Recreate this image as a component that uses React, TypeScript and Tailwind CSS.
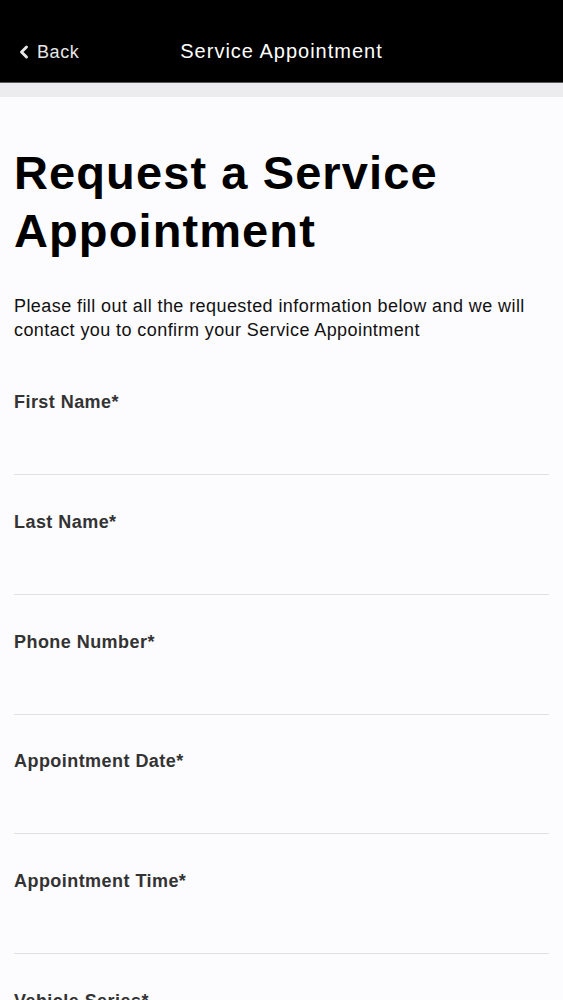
import { ChevronLeft } from "lucide-react";

const fields = [
  "First Name*",
  "Last Name*",
  "Phone Number*",
  "Appointment Date*",
  "Appointment Time*",
  "Vehicle Series*",
  "Vehicle Year*",
];

function Field({ label }: { label: string }) {
  return (
    <div className="mb-[34.75px]">
      <label className="block text-[18px] leading-[24px] font-bold tracking-[0.45px] text-[#333333]">
        {label}
      </label>
      <input
        type="text"
        className="block h-[61px] w-full border-b border-[#e1e0e3] bg-transparent outline-none"
      />
    </div>
  );
}

export default function App() {
  return (
    <div
      className="min-h-screen bg-[#fcfbfd]"
      style={{ fontFamily: '"Liberation Sans", Arial, sans-serif' }}
    >
      {/* Nav bar */}
      <header className="relative flex h-[83px] items-center justify-center border-b border-[#5a5a5a] bg-black">
        <button className="absolute left-[14px] top-[38px] flex items-center gap-[3px] text-[18px] leading-[28px] tracking-[0.6px] text-[#e6e6e6]">
          <ChevronLeft className="h-[20px] w-[20px]" strokeWidth={3.5} />
          Back
        </button>
        <h1 className="mt-[20px] text-[20px] tracking-[1px] text-white">Service Appointment</h1>
      </header>
      <div className="h-[14px] bg-[#ececee]" />

      <main className="px-[14px]">
        <h2 className="mt-[47px] text-[47px] leading-[58px] font-bold tracking-[1.1px] text-black">
          Request a Service Appointment
        </h2>
        <p className="mt-[34px] text-[18px] leading-[24px] tracking-[0.42px] text-[#111111]">
          Please fill out all the requested information below and we will contact you to confirm
          your Service Appointment
        </p>

        <form className="mt-[48px]">
          {fields.map((f) => (
            <Field key={f} label={f} />
          ))}
        </form>
      </main>
    </div>
  );
}
